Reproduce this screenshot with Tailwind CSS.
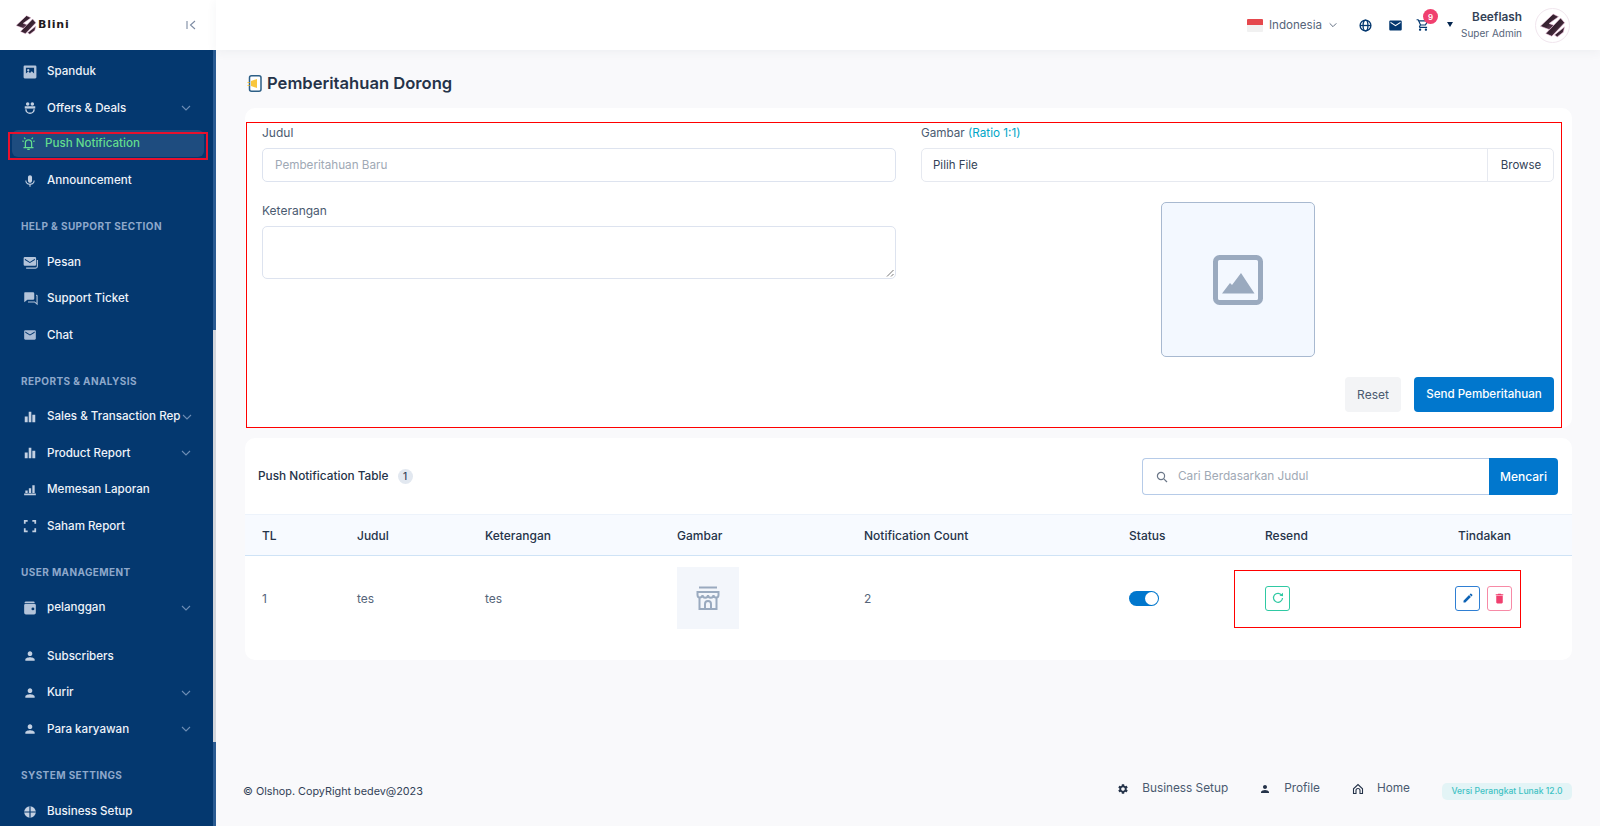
<!DOCTYPE html>
<html lang="id">
<head>
  <meta charset="UTF-8">
  <title>Pemberitahuan Dorong</title>
  <meta name="viewport" content="width=device-width, initial-scale=1.0">
  <script src="https://cdn.jsdelivr.net/npm/@tailwindcss/browser@4"></script>
</head>
<body class="font-['Inter',sans-serif] bg-[#f9f9fb] text-[#334257]">

  <svg class="absolute h-0 w-0">
    <defs>
      <linearGradient id="logoFill" x1="0" y1="0" x2="1" y2="1">
        <stop offset="0" stop-color="#241a22"/>
        <stop offset="0.55" stop-color="#3a2433"/>
        <stop offset="1" stop-color="#8a5a78"/>
      </linearGradient>
    </defs>
    <symbol id="i-person" viewBox="0 0 24 24"><path fill="currentColor" d="M12 12c2.21 0 4-1.79 4-4s-1.79-4-4-4-4 1.79-4 4 1.79 4 4 4zm0 2c-2.67 0-8 1.34-8 4v2h16v-2c0-2.66-5.33-4-8-4z"/></symbol>
    <symbol id="i-mail" viewBox="0 0 24 24"><path fill="currentColor" d="M20 4H4c-1.1 0-2 .9-2 2v12c0 1.1.9 2 2 2h16c1.1 0 2-.9 2-2V6c0-1.1-.9-2-2-2zm0 4l-8 5-8-5V6l8 5 8-5v2z"/></symbol>
    <symbol id="i-bars" viewBox="0 0 24 24"><path fill="currentColor" d="M3 11h5v10H3zM9.800 3h4.500v18H9.800zM16 8h5v13h-5z"/></symbol>
    <symbol id="i-chev" viewBox="0 0 12 12"><path fill="none" stroke="currentColor" stroke-width="1.1" d="M2 4l4 4 4-4"/></symbol>
    <symbol id="i-logo" viewBox="0 0 40 40">
      <g fill="url(#logoFill)" stroke="#f3c6e2" stroke-width="0.9" stroke-linejoin="round">
        <path d="M21 3 L29 7 L15 17 L23 20 L15 26 L2 21 Z"/>
        <path d="M32 9 L38 16 L19 36 L10 32 Z"/>
        <path d="M38 22 L36 30 L27 37 L23 34 Z"/>
      </g>
    </symbol>
  </svg>

  <div class="relative flex h-[826px] w-[1600px] overflow-hidden">

    <!-- sidebar -->
    <aside class="relative flex w-[216px] shrink-0 flex-col bg-[#04386f]">
      <div class="flex h-[50px] shrink-0 items-center justify-between bg-white pl-[15px] pr-[19px]">
        <div class="flex items-center gap-[1px]">
          <svg class="h-[22px] w-[22px]"><use href="#i-logo"/></svg>
          <span class="font-['DejaVu_Sans',sans-serif] text-[11px] font-bold tracking-[0.8px] text-[#1f1a20]">Blini</span>
        </div>
        <svg class="h-3 w-3 text-[#7d8ba3]" viewBox="0 0 12 12"><path fill="none" stroke="currentColor" stroke-width="1.1" d="M2 2v8M10 2L5.500 6l4.500 4"/></svg>
      </div>

      <nav class="flex-1 overflow-hidden pt-[3.5px] text-[11.6px] font-medium text-[#eef3fa]">
        <a class="flex h-[36.5px] items-center pl-[23px] pr-6">
          <svg class="mr-[10px] h-[14px] w-[14px] text-[#b4c4da]" viewBox="0 0 24 24"><path fill="currentColor" fill-rule="evenodd" d="M3 1h18a2 2 0 0 1 2 2v18a2 2 0 0 1-2 2H3a2 2 0 0 1-2-2V3a2 2 0 0 1 2-2zm2 3.500v10l4-3.500 3 2.500 3-3 4 4V4.500zM9 7a2 2 0 1 1 0 4 2 2 0 0 1 0-4z"/></svg>Spanduk
        </a>
        <a class="flex h-[36.5px] items-center pl-[23px] pr-6">
          <svg class="mr-[10px] h-[14px] w-[14px] text-[#c3d0e2]" viewBox="0 0 24 24"><g fill="currentColor"><circle cx="8" cy="5" r="3"/><circle cx="16" cy="5" r="3"/><path d="M3 9h18v4H3z"/></g><path fill="none" stroke="currentColor" stroke-width="2.500" d="M5 14c0 4 3 7 7 7s7-3 7-7"/></svg>Offers &amp; Deals
          <svg class="ml-auto h-3 w-3 text-[#6d8db5]"><use href="#i-chev"/></svg>
        </a>
        <a class="mx-[12px] mt-[3.5px] mb-[5.5px] flex h-[27px] items-center rounded-md bg-[#1e4c7f] pl-[9px] pr-6 text-[#63dd8e]">
          <svg class="mr-[9px] h-[15px] w-[15px]" viewBox="0 0 24 24"><path fill="none" stroke="currentColor" stroke-width="2" d="M7 18v-7a5 5 0 0 1 10 0v7M4 18.500h16M10 21.500h4M2 8l2.500.5M22 8l-2.500.5M5 2.500L7 5M19 2.500L17 5"/></svg>Push Notification
        </a>
        <a class="flex h-[36.5px] items-center pl-[23px] pr-6">
          <svg class="mr-[10px] h-[14px] w-[14px] text-[#c3d0e2]" viewBox="0 0 24 24"><path fill="currentColor" d="M12 15c1.900 0 3.500-1.500 3.500-3.500v-6C15.500 3.600 13.900 2 12 2S8.500 3.600 8.500 5.500v6c0 2 1.600 3.500 3.500 3.500zm6.300-4c0 3.500-3 5.700-6.300 5.700S5.700 14.500 5.700 11H4c0 4 3 7 7 7.600V22h2v-3.400c4-.6 7-3.600 7-7.600h-1.700z"/></svg>Announcement
        </a>

        <div class="h-[45px] pt-[21px] pl-[21px] text-[10px] leading-[12px] font-bold tracking-[0.4px] text-[#8ea8cb] uppercase">Help &amp; Support Section</div>
        <a class="flex h-[36.5px] items-center pl-[23px] pr-6">
          <svg class="mr-[9px] h-[15px] w-[15px] text-[#b4c4da]" viewBox="0 0 24 24"><path fill="currentColor" d="M3 3h16a2 2 0 0 1 2 2v10a2 2 0 0 1-2 2H3a2 2 0 0 1-2-2V5a2 2 0 0 1 2-2zm0 3v1.800l8 5 8-5V6l-8 5z"/><path fill="none" stroke="currentColor" stroke-width="1.800" d="M23 8v10a3 3 0 0 1-3 3H5"/></svg>Pesan
        </a>
        <a class="flex h-[36.5px] items-center pl-[23px] pr-6">
          <svg class="mr-[9px] h-[15px] w-[15px] text-[#b4c4da]" viewBox="0 0 24 24"><path fill="currentColor" d="M3 2h13a2 2 0 0 1 2 2v8a2 2 0 0 1-2 2H7l-5 4V3a1 1 0 0 1 1-1z"/><path fill="none" stroke="currentColor" stroke-width="1.800" d="M21 7h.5a1 1 0 0 1 1 1v13l-4-3.500H8"/></svg>Support Ticket
        </a>
        <a class="flex h-[36.5px] items-center pl-[23px] pr-6">
          <svg class="mr-[10px] h-[14px] w-[14px] text-[#a9bcd6]"><use href="#i-mail"/></svg>Chat
        </a>

        <div class="h-[45px] pt-[21px] pl-[21px] text-[10px] leading-[12px] font-bold tracking-[0.4px] text-[#8ea8cb] uppercase">Reports &amp; Analysis</div>
        <a class="flex h-[36.5px] items-center pl-[23px] pr-6">
          <svg class="mr-[10px] h-[14px] w-[14px] shrink-0 text-[#c3d0e2]"><use href="#i-bars"/></svg><span class="whitespace-nowrap">Sales &amp; Transaction Rep</span>
          <svg class="ml-auto h-3 w-3 shrink-0 text-[#6d8db5]"><use href="#i-chev"/></svg>
        </a>
        <a class="flex h-[36.5px] items-center pl-[23px] pr-6">
          <svg class="mr-[10px] h-[14px] w-[14px] text-[#c3d0e2]"><use href="#i-bars"/></svg>Product Report
          <svg class="ml-auto h-3 w-3 text-[#6d8db5]"><use href="#i-chev"/></svg>
        </a>
        <a class="flex h-[36.5px] items-center pl-[23px] pr-6">
          <svg class="mr-[10px] h-[14px] w-[14px] text-[#c3d0e2]" viewBox="0 0 24 24"><path fill="currentColor" d="M2 18h20v3H2zM4 13h4v4H4zM10 9h4v8h-4zM16 4h4v13h-4z"/></svg>Memesan Laporan
        </a>
        <a class="flex h-[36.5px] items-center pl-[23px] pr-6">
          <svg class="mr-[10px] h-[14px] w-[14px] text-[#c3d0e2]" viewBox="0 0 24 24"><path fill="none" stroke="currentColor" stroke-width="3" d="M3 8V3h5M16 3h5v5M21 16v5h-5M8 21H3v-5"/></svg>Saham Report
        </a>

        <div class="h-[45px] pt-[21px] pl-[21px] text-[10px] leading-[12px] font-bold tracking-[0.4px] text-[#8ea8cb] uppercase">User Management</div>
        <a class="flex h-[36.5px] items-center pl-[23px] pr-6">
          <svg class="mr-[10px] h-[14px] w-[14px] text-[#b4c4da]" viewBox="0 0 24 24"><path fill="currentColor" fill-rule="evenodd" d="M5 1h13a2 2 0 0 1 2 2v1H3a2 2 0 0 1 2-3zM4 5h16a2 2 0 0 1 2 2v13a3 3 0 0 1-3 3H5a3 3 0 0 1-3-3V7a2 2 0 0 1 2-2zm13 6a2.500 2.500 0 1 0 0 5 2.500 2.500 0 0 0 0-5z"/></svg>pelanggan
          <svg class="ml-auto h-3 w-3 text-[#6d8db5]"><use href="#i-chev"/></svg>
        </a>
        <a class="mt-[12px] flex h-[36.5px] items-center pl-[23px] pr-6">
          <svg class="mr-[10px] h-[14px] w-[14px] text-[#c3d0e2]"><use href="#i-person"/></svg>Subscribers
        </a>
        <a class="flex h-[36.5px] items-center pl-[23px] pr-6">
          <svg class="mr-[10px] h-[14px] w-[14px] text-[#c3d0e2]"><use href="#i-person"/></svg>Kurir
          <svg class="ml-auto h-3 w-3 text-[#6d8db5]"><use href="#i-chev"/></svg>
        </a>
        <a class="flex h-[36.5px] items-center pl-[23px] pr-6">
          <svg class="mr-[10px] h-[14px] w-[14px] text-[#c3d0e2]"><use href="#i-person"/></svg>Para karyawan
          <svg class="ml-auto h-3 w-3 text-[#6d8db5]"><use href="#i-chev"/></svg>
        </a>

        <div class="h-[46px] pt-[21px] pl-[21px] text-[10px] leading-[12px] font-bold tracking-[0.4px] text-[#8ea8cb] uppercase">System Settings</div>
        <a class="flex h-[36.5px] items-center pl-[23px] pr-6">
          <svg class="mr-[10px] h-[14px] w-[14px] text-[#c3d0e2]" viewBox="0 0 24 24"><circle cx="12" cy="12" r="10" fill="currentColor"/><path fill="none" stroke="#04386f" stroke-width="2" d="M2 12h20M12 2v20"/></svg>Business Setup
        </a>
      </nav>

      <!-- scrollbar thumb -->
      <div class="absolute top-[50px] right-0 h-[776px] w-[3px] bg-[#2a5b92]"></div>
      <div class="absolute top-[330px] right-0 h-[412px] w-[3px] bg-[#d3d6dc]"></div>
    </aside>

    <div class="flex min-w-0 flex-1 flex-col">
      <!-- top bar -->
      <header class="z-10 flex h-[50px] shrink-0 items-center justify-end bg-white pr-[30px] shadow-[0_2px_10px_rgba(51,66,87,0.06)]">
        <div class="flex flex-col">
          <span class="h-[6.5px] w-[16px] rounded-t-[1px] bg-[#e5484d]"></span>
          <span class="h-[6.5px] w-[16px] rounded-b-[1px] bg-[#f1f1f1]"></span>
        </div>
        <span class="ml-[6px] pt-[1px] text-[11.6px] text-[#56657a]">Indonesia</span>
        <svg class="ml-[6px] h-[10px] w-[10px] text-[#56657a]"><use href="#i-chev"/></svg>
        <svg class="ml-[21px] h-[13px] w-[13px] text-[#04386f]" viewBox="0 0 24 24"><g fill="none" stroke="currentColor" stroke-width="2.400"><circle cx="12" cy="12" r="10"/><ellipse cx="12" cy="12" rx="4.500" ry="10"/><path d="M2 12h20"/></g></svg>
        <svg class="ml-[16px] h-[15px] w-[15px] text-[#04386f]"><use href="#i-mail"/></svg>
        <div class="relative ml-[13px]">
          <svg class="h-[14px] w-[14px] text-[#04386f]" viewBox="0 0 24 24"><path fill="currentColor" d="M15.550 13c.75 0 1.410-.41 1.750-1.030l3.580-6.490c.37-.66-.11-1.480-.87-1.480H5.210l-.94-2H1v2h2l3.600 7.590-1.350 2.440C4.520 15.370 5.480 17 7 17h12v-2H7l1.100-2h7.450zM6.160 6h12.150l-2.760 5H8.530L6.160 6zM7 18c-1.100 0-1.990.9-1.990 2S5.900 22 7 22s2-.9 2-2-.9-2-2-2zm10 0c-1.100 0-1.990.9-1.990 2s.89 2 1.990 2 2-.9 2-2-.9-2-2-2z"/></svg>
          <span class="absolute -top-[9px] left-[7px] flex h-[15px] w-[15px] items-center justify-center rounded-full bg-[#f0406f] text-[8px] font-semibold text-white">9</span>
        </div>
        <span class="mb-[2px] ml-[17px] h-0 w-0 border-x-[3.5px] border-t-[5px] border-x-transparent border-t-[#04264f]"></span>
        <div class="ml-[8px] flex flex-col items-end">
          <span class="text-[11.8px] leading-[15px] font-semibold text-[#334257]">Beeflash</span>
          <span class="mt-[1px] text-[10px] leading-[14px] text-[#56657a]">Super Admin</span>
        </div>
        <div class="ml-[13px] flex h-[35px] w-[35px] items-center justify-center rounded-full border border-[#f1e6ee] bg-white">
          <svg class="h-[27px] w-[27px]"><use href="#i-logo"/></svg>
        </div>
      </header>

      <!-- content -->
      <main class="flex flex-1 flex-col pl-[29px] pr-[28px]">
        <div class="flex h-[58px] items-center pt-[8px] pl-[2px]">
          <svg class="mr-[5px] h-[17px] w-[15px]" viewBox="0 0 15 17"><rect x="2.500" y="0.800" width="11.500" height="15.400" rx="2" fill="#fff" stroke="#2d5f86" stroke-width="1.500"/><path fill="#f9c63d" d="M4 6l6-2v9l-6-2z"/><path fill="#f9c63d" d="M0.500 7h2v1h-2zM0.500 10h2v1h-2z"/></svg>
          <h1 class="text-[16.6px] font-semibold text-[#253349]">Pemberitahuan Dorong</h1>
        </div>

        <!-- form card -->
        <section class="flex h-[320px] gap-[25px] rounded-[10px] bg-white pt-[17px] pl-[17px] pr-[18px]">
          <div class="w-[634px]">
            <label class="block text-[12px] leading-[16px] text-[#4a5a70]">Judul</label>
            <div class="mt-[7px] flex h-[34px] items-center rounded-[5px] border border-[#dde3ef] pt-[2px] pl-[12px] text-[11.7px] text-[#a0a9b5]">Pemberitahuan Baru</div>
            <label class="mt-[21px] block text-[12px] leading-[16px] text-[#4a5a70]">Keterangan</label>
            <div class="relative mt-[7px] h-[53px] rounded-[5px] border border-[#dde3ef]">
              <svg class="absolute right-[1px] bottom-[1px] h-[8px] w-[8px] text-[#777]" viewBox="0 0 8 8"><path fill="none" stroke="currentColor" d="M7.500 1L1 7.500M7.500 5L5 7.500"/></svg>
            </div>
          </div>
          <div class="flex flex-1 flex-col">
            <label class="block text-[11.7px] leading-[16px] text-[#4a5a70]">Gambar <span class="text-[#00a6c7]">(Ratio 1:1)</span></label>
            <div class="mt-[7px] flex h-[34px] items-center justify-between rounded-[5px] border border-[#e6e9f0] pl-[11px] text-[11.5px] text-[#334257]">
              <span class="pt-[1px]">Pilih File</span>
              <span class="flex h-full w-[66px] items-center justify-center border-l border-[#e6e9f0] pt-[1px] pl-[1px]">Browse</span>
            </div>
            <div class="mt-[20px] ml-[1px] flex h-[155px] w-[154px] items-center justify-center self-center rounded-[5px] border border-[#a8b9d0] bg-[#f3f8ff]">
              <svg class="h-[50px] w-[50px]" viewBox="0 0 50 50"><rect x="2.500" y="2.500" width="45" height="45" rx="4" fill="none" stroke="#9aaabf" stroke-width="5"/><path fill="#9aaabf" d="M9 38.500l8-10.500 2 2 9-12 13.500 20.500z"/></svg>
            </div>
            <div class="mt-[20px] flex justify-end gap-[13px]">
              <button class="h-[35px] w-[56px] rounded-[4px] bg-[#f3f4f6] text-[12px] text-[#4a5a70]">Reset</button>
              <button class="h-[35px] w-[140px] rounded-[4px] bg-[#0177cd] text-[11.6px] font-medium text-white">Send Pemberitahuan</button>
            </div>
          </div>
        </section>

        <!-- table card -->
        <section class="mt-[10px] h-[222px] rounded-[10px] bg-white">
          <div class="flex h-[76px] items-center justify-between pl-[13px] pr-[14px] pt-[1px]">
            <div class="flex items-center gap-[9px]">
              <h2 class="text-[11.8px] font-medium text-[#253349]">Push Notification Table</h2>
              <span class="flex h-[15px] w-[15px] items-center justify-center rounded-full bg-[#e2e8f0] text-[10px] font-medium text-[#334257]">1</span>
            </div>
            <div class="flex h-[37px] w-[416px]">
              <div class="flex flex-1 items-center rounded-l-[4px] border border-r-0 border-[#b6cbe8] pl-[13px] text-[11.8px] text-[#a0a9b5]">
                <svg class="mr-[10px] h-[12px] w-[12px] text-[#6b7788]" viewBox="0 0 12 12"><g fill="none" stroke="currentColor" stroke-width="1.200"><circle cx="5" cy="5" r="3.600"/><path d="M7.800 7.800L11 11"/></g></svg>
                <span class="pt-[1px]">Cari Berdasarkan Judul</span>
              </div>
              <button class="w-[69px] rounded-r-[4px] bg-[#0177cd] text-[12px] font-medium text-white">Mencari</button>
            </div>
          </div>
          <div class="grid h-[42px] grid-cols-[95px_128px_192px_187px_265px_136px_1fr] items-center border-y border-t-[#edf3fb] border-b-[#cfe3f6] bg-[#f7faff] pt-[2px] pl-[17px] text-[12px] font-medium text-[#253349]">
            <span>TL</span><span>Judul</span><span>Keterangan</span><span>Gambar</span><span>Notification Count</span><span>Status</span>
            <span class="flex justify-between pr-[61px]"><span>Resend</span><span>Tindakan</span></span>
          </div>
          <div class="grid h-[86px] grid-cols-[95px_128px_192px_187px_265px_136px_1fr] items-center pb-[2px] pl-[17px] text-[12px] text-[#56657a]">
            <span class="pt-[2px]">1</span><span class="pt-[2px]">tes</span><span class="pt-[2px]">tes</span>
            <span class="flex h-[62px] w-[62px] items-center justify-center bg-[#f3f6fb]">
              <svg class="h-[24px] w-[24px]" viewBox="0 0 24 24"><g fill="none" stroke="#9aaabf" stroke-width="2"><path d="M3 1.500h18"/><path d="M1.500 6h21v3a2.500 2.500 0 0 1-5 0 2.500 2.500 0 0 1-5.500 0 2.500 2.500 0 0 1-5.500 0 2.500 2.500 0 0 1-5 0z"/><path d="M3.500 12v11h17V12"/><path d="M9 23v-5a3 3 0 0 1 6 0v5"/></g></svg>
            </span>
            <span class="pt-[2px]">2</span>
            <span class="flex h-[15px] w-[30px] items-center justify-end rounded-full bg-[#0177cd] pr-[1px]">
              <span class="h-[13px] w-[13px] rounded-full bg-white"></span>
            </span>
            <span class="flex pr-[60px]">
              <span class="flex h-[25px] w-[25px] items-center justify-center rounded-[3px] border border-[#2fc9a3] text-[#2fc9a3]">
                <svg class="h-[12px] w-[12px]" viewBox="0 0 12 12"><g fill="none" stroke="currentColor" stroke-width="1.200"><path d="M9.800 3.400A4.500 4.500 0 1 0 10.500 6"/></g><path fill="currentColor" d="M7.500 3.800L11 4.200V0.800z"/></svg>
              </span>
              <span class="ml-auto flex h-[25px] w-[25px] items-center justify-center rounded-[3px] border border-[#2f7fd3] text-[#0e63b5]">
                <svg class="h-[12px] w-[12px]" viewBox="0 0 24 24"><path fill="currentColor" d="M3 17.250V21h3.750L17.810 9.940l-3.750-3.750L3 17.250zM20.710 7.040c.39-.39.39-1.020 0-1.410l-2.340-2.340c-.39-.39-1.020-.39-1.410 0l-1.830 1.830 3.750 3.750 1.830-1.830z"/></svg>
              </span>
              <span class="ml-[7px] flex h-[25px] w-[25px] items-center justify-center rounded-[3px] border border-[#f78aa6] text-[#f0406f]">
                <svg class="h-[13px] w-[13px]" viewBox="0 0 24 24"><path fill="currentColor" d="M6 19c0 1.100.9 2 2 2h8c1.100 0 2-.9 2-2V7H6v12zM19 4h-3.500l-1-1h-5l-1 1H5v2h14V4z"/></svg>
              </span>
            </span>
          </div>
        </section>

        <!-- footer -->
        <footer class="mt-auto mb-[24px] flex h-[20px] items-center text-[11.8px] text-[#4a5a70]">
          <span class="-ml-[2px] text-[10.8px] text-[#334257]">© Olshop. CopyRight bedev@2023</span>
          <div class="ml-auto flex -translate-y-[3px] items-center">
            <svg class="h-[12px] w-[12px] text-[#253349]" viewBox="0 0 24 24"><path fill="currentColor" d="M19.140 12.940c.04-.3.06-.61.06-.94 0-.32-.02-.64-.07-.94l2.030-1.580c.18-.14.23-.41.12-.61l-1.920-3.320c-.12-.22-.37-.29-.59-.22l-2.390.96c-.5-.38-1.030-.7-1.620-.94l-.36-2.540c-.04-.24-.24-.41-.48-.41h-3.840c-.24 0-.43.17-.47.41l-.36 2.540c-.59.24-1.130.57-1.620.94l-2.390-.96c-.22-.08-.47 0-.59.22L2.740 8.870c-.12.21-.08.47.12.61l2.030 1.580c-.05.3-.09.63-.09.94s.02.64.07.94l-2.030 1.580c-.18.14-.23.41-.12.61l1.920 3.320c.12.22.37.29.59.22l2.390-.96c.5.38 1.030.7 1.620.94l.36 2.540c.05.24.24.41.48.41h3.840c.24 0 .44-.17.47-.41l.36-2.540c.59-.24 1.130-.56 1.620-.94l2.390.96c.22.08.47 0 .59-.22l1.920-3.320c.12-.22.07-.47-.12-.61l-2.010-1.580zM12 15.600c-1.980 0-3.600-1.620-3.600-3.600s1.620-3.600 3.600-3.600 3.600 1.620 3.600 3.600-1.620 3.600-3.600 3.600z"/></svg>
            <span class="ml-[13px]">Business Setup</span>
            <svg class="ml-[31px] h-[12px] w-[12px] text-[#253349]"><use href="#i-person"/></svg>
            <span class="ml-[13px]">Profile</span>
            <svg class="ml-[32px] h-[12px] w-[12px] text-[#253349]" viewBox="0 0 24 24"><path fill="none" stroke="currentColor" stroke-width="2.200" d="M3 21v-9.500L12 3l9 8.500V21h-5v-6a4 4 0 0 0-8 0v6z"/></svg>
            <span class="ml-[13px]">Home</span>
            <span class="mt-[4px] ml-[32px] flex h-[17px] w-[130px] items-center justify-center rounded-[5px] bg-[#e3f4f6] text-[8.6px] font-medium text-[#3fc2c4]">Versi Perangkat Lunak 12.0</span>
          </div>
        </footer>
      </main>
    </div>

    <!-- red annotation boxes from the original capture -->
    <div class="absolute top-[132px] left-[8px] h-[28px] w-[200px] border-2 border-[#e8112d]"></div>
    <div class="absolute top-[122px] left-[246px] h-[306px] w-[1316px] border border-[#ff0000]"></div>
    <div class="absolute top-[570px] left-[1234px] h-[58px] w-[287px] border border-[#ff0000]"></div>
  </div>
</body>
</html>
